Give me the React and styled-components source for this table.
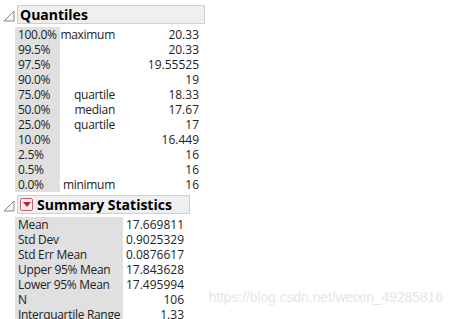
import { Fragment } from 'react'
import styled, { createGlobalStyle } from 'styled-components'

const GlobalStyle = createGlobalStyle`
  body {
    margin: 0;
    background: #ffffff;
    font-family: 'Open Sans', 'Noto Sans', sans-serif;
    color: #111;
  }
`

const Page = styled.div`
  position: relative;
  width: 452px;
  height: 319px;
  overflow: hidden;
  padding-top: 5px;
  box-sizing: border-box;
`

const Section = styled.div`
  display: flex;
  flex-direction: column;
  margin-bottom: ${(props) => props.mb || '0px'};
`

const HeaderRow = styled.div`
  display: flex;
  align-items: center;
  gap: 2px;
  padding-left: 3px;
`

const Toggle = styled.svg`
  width: 12px;
  height: 12px;
  flex: none;
  margin-top: 2px;
`

const HeaderBox = styled.div`
  display: flex;
  align-items: center;
  gap: 4px;
  width: ${(props) => props.width};
  height: 19px;
  box-sizing: border-box;
  padding-left: 2px;
  background: #efefef;
  border: 1px solid #cfcfcf;
  font-size: 14px;
  font-weight: 700;
  color: #000;
`

const MenuButton = styled.span`
  display: flex;
  align-items: center;
  justify-content: center;
  width: 13px;
  height: 13px;
  box-sizing: border-box;
  border: 1px solid #c86070;
  border-radius: 2px;
  background: #f6f0f0;
`

const Table = styled.div`
  display: grid;
  grid-template-columns: ${(props) => props.cols};
  margin-left: 15px;
  margin-top: 3px;
  font-size: 12px;
  line-height: 15px;
  color: #222;
`

const LabelCell = styled.div`
  background: #e0e0e0;
  padding-left: 3px;
  white-space: nowrap;
  letter-spacing: -0.3px;
`

const NoteCell = styled.div`
  text-align: right;
  white-space: nowrap;
  letter-spacing: -0.3px;
`

const ValueCell = styled.div`
  text-align: right;
  white-space: nowrap;
`

const Watermark = styled.div`
  position: absolute;
  right: 9px;
  top: 289px;
  font-family: 'Liberation Sans', Arial, sans-serif;
  font-size: 14px;
  color: #e6e6e6;
  letter-spacing: -0.1px;
`

const quantiles = [
  ['100.0%', 'maximum', '20.33'],
  ['99.5%', '', '20.33'],
  ['97.5%', '', '19.55525'],
  ['90.0%', '', '19'],
  ['75.0%', 'quartile', '18.33'],
  ['50.0%', 'median', '17.67'],
  ['25.0%', 'quartile', '17'],
  ['10.0%', '', '16.449'],
  ['2.5%', '', '16'],
  ['0.5%', '', '16'],
  ['0.0%', 'minimum', '16'],
]

const summary = [
  ['Mean', '17.669811'],
  ['Std Dev', '0.9025329'],
  ['Std Err Mean', '0.0876617'],
  ['Upper 95% Mean', '17.843628'],
  ['Lower 95% Mean', '17.495994'],
  ['N', '106'],
  ['Interquartile Range', '1.33'],
]

const DisclosureIcon = () => (
  <Toggle viewBox='0 0 12 12'>
    <path d='M11 1 L11 11 L1 11 Z' fill='#f4f4f4' stroke='#8a8a8a' strokeWidth='1' />
  </Toggle>
)

export default function App() {
  return (
    <Page>
      <GlobalStyle />
      <Section mb='3px'>
        <HeaderRow>
          <DisclosureIcon />
          <HeaderBox width='188px'>Quantiles</HeaderBox>
        </HeaderRow>
        <Table cols='45px 55px 84px'>
          {quantiles.map(([p, note, v]) => (
            <Fragment key={p}>
              <LabelCell>{p}</LabelCell>
              <NoteCell>{note}</NoteCell>
              <ValueCell>{v}</ValueCell>
            </Fragment>
          ))}
        </Table>
      </Section>
      <Section>
        <HeaderRow>
          <DisclosureIcon />
          <HeaderBox width='173px'>
            <MenuButton>
              <svg width='8' height='5' viewBox='0 0 8 5'>
                <path d='M0 0 L8 0 L4 5 Z' fill='#d0182f' />
              </svg>
            </MenuButton>
            Summary Statistics
          </HeaderBox>
        </HeaderRow>
        <Table cols='108px 61px'>
          {summary.map(([label, v]) => (
            <Fragment key={label}>
              <LabelCell>{label}</LabelCell>
              <ValueCell>{v}</ValueCell>
            </Fragment>
          ))}
        </Table>
      </Section>
      <Watermark>https://blog.csdn.net/weixin_49285816</Watermark>
    </Page>
  )
}
